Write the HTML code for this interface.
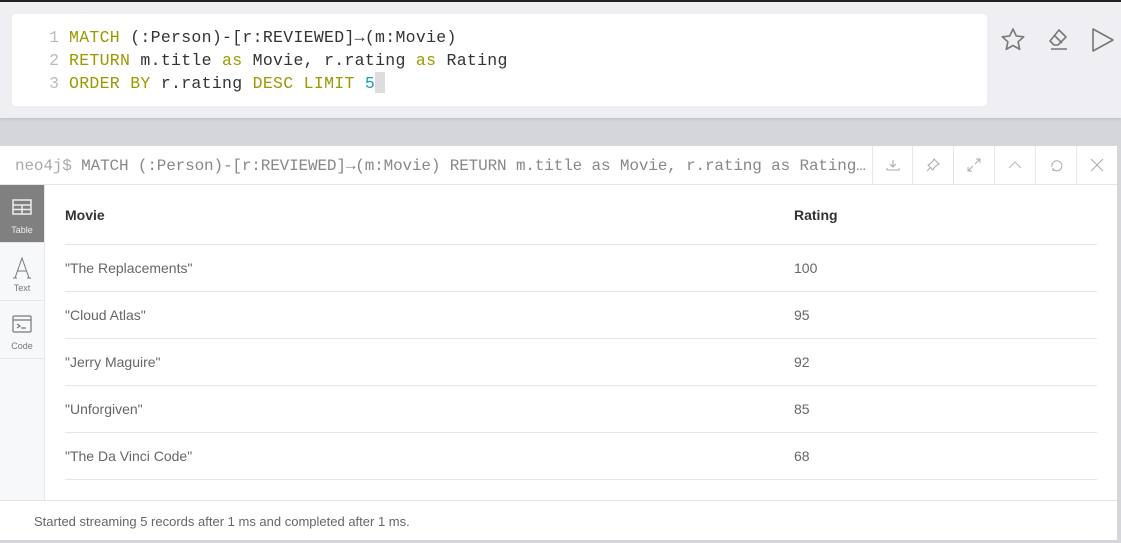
<!DOCTYPE html>
<html><head><meta charset="utf-8"><style>
*{margin:0;padding:0;box-sizing:border-box}
body{width:1121px;height:543px;overflow:hidden;background:#d4d6da;font-family:"Liberation Sans",sans-serif;position:relative}
.topline{position:absolute;left:0;top:0;width:1121px;height:2px;background:#222}
.edsec{position:absolute;left:0;top:2px;width:1121px;height:116px;background:#efeff3;box-shadow:0 1px 3px rgba(0,0,0,.12)}
.ed{position:absolute;left:12px;top:12px;width:975px;height:92px;background:#fff;border-radius:4px}
.code{position:absolute;left:0;top:12px;font-family:"Liberation Mono",monospace;font-size:16.5px;letter-spacing:0.3px;line-height:23px;color:#333;white-space:pre}
.ln{display:inline-block;width:57px;text-align:right;padding-right:10px;color:#bbb;letter-spacing:0}
.k{color:#9a9a00}.n{color:#17a2b8}
.cur{display:inline-block;width:10px;height:21px;background:#ddd;vertical-align:-5px}
.card{position:absolute;left:0;top:146px;width:1117px;height:394px;background:#fff}
.hdr{position:absolute;left:0;top:0;width:1117px;height:39px;border-bottom:1px solid #e6e6ea}
.hq{position:absolute;left:15px;top:11px;font-family:"Liberation Mono",monospace;font-size:16px;letter-spacing:-0.15px;color:#888;white-space:nowrap;width:855px;overflow:hidden;text-overflow:ellipsis}
.hq span{color:#aaa}
.btn{position:absolute;top:0;width:41px;height:39px;border-left:1px solid #e6e6ea}
.btn svg{position:absolute;left:13px;top:12px}
.side{position:absolute;left:0;top:39px;width:45px;height:315px;background:#f7f8fa;border-right:1px solid #e6e6ea}
.tab{position:absolute;left:0;width:44px;height:58px;border-bottom:1px solid #e6e6ea;text-align:center;font-size:9px;color:#777}
.tab.act{background:#808080;color:#eee}
.tab svg{position:absolute;left:12px;top:14px}
.tab .l{position:absolute;left:0;width:44px;top:40px}
.th{position:absolute;top:61px;font-size:14px;font-weight:bold;color:#333}
.row{position:absolute;left:65px;width:1032px;height:47px;border-top:1px solid #e6e6ea;font-size:14px;color:#666}
.row span{position:absolute;top:15px}
.foot{position:absolute;left:0;top:354px;width:1117px;height:40px;border-top:1px solid #e6e6ea;font-size:13px;color:#666}
.foot span{position:absolute;left:34px;top:13px}
</style></head><body>
<div class="topline"></div>
<div class="edsec">
<div class="ed"><div class="code"><span class="ln">1</span><span class="k">MATCH</span> (:Person)-[r:REVIEWED]→(m:Movie)
<span class="ln">2</span><span class="k">RETURN</span> m.title <span class="k">as</span> Movie, r.rating <span class="k">as</span> Rating
<span class="ln">3</span><span class="k">ORDER BY</span> r.rating <span class="k">DESC LIMIT</span> <span class="n">5</span><span class="cur"></span></div></div>
<svg style="position:absolute;left:1000px;top:25px" width="26" height="26" viewBox="0 0 26 26" fill="none" stroke="#777" stroke-width="1.6" stroke-linejoin="round"><path d="M13 2l3.3 7 7.4.8-5.6 5 1.6 7.5L13 18.5l-6.7 3.8 1.6-7.5-5.6-5 7.4-.8z"/></svg>
<svg style="position:absolute;left:1045px;top:25px" width="26" height="26" viewBox="0 0 26 26" fill="none" stroke="#777" stroke-width="1.6" stroke-linejoin="round"><path d="M14 3l7 7-8 8H9l-4-4z M9 8l8 8 M6 22h16"/></svg>
<svg style="position:absolute;left:1090px;top:25px" width="26" height="26" viewBox="0 0 26 26" fill="none" stroke="#777" stroke-width="1.6" stroke-linejoin="round"><path d="M3 2v22l20-11z"/></svg>
</div>
<div class="card">
<div class="hdr">
<div class="hq"><span>neo4j$</span> MATCH (:Person)-[r:REVIEWED]→(m:Movie) RETURN m.title as Movie, r.rating as Rating ORDER BY r.rating DESC LIMIT 5</div>
<div class="btn" style="left:872px"><svg width="14" height="14" viewBox="0 0 14 14" fill="none" stroke="#aaa"><path d="M7 2v7M4 6l3 3 3-3M1 10v2h12v-2"/></svg></div>
<div class="btn" style="left:912px"><svg width="14" height="14" viewBox="0 0 14 14" fill="none" stroke="#aaa"><path d="M8 1l5 5-2 1-3 3-1 2-5-5 2-1 3-3zM4 10l-3 3"/></svg></div>
<div class="btn" style="left:953px"><svg width="14" height="14" viewBox="0 0 14 14" fill="none" stroke="#aaa"><path d="M8 6l5-5M9 1h4v4M6 8l-5 5M1 9v4h4"/></svg></div>
<div class="btn" style="left:994px"><svg width="14" height="14" viewBox="0 0 14 14" fill="none" stroke="#bbb"><path d="M1 10l6-6 6 6"/></svg></div>
<div class="btn" style="left:1035px"><svg width="14" height="14" viewBox="0 0 14 14" fill="none" stroke="#aaa"><path d="M4 11a5 5 0 1 0-1-2M4 13v-3"/></svg></div>
<div class="btn" style="left:1076px"><svg width="14" height="14" viewBox="0 0 14 14" fill="none" stroke="#aaa"><path d="M1 1l12 12M13 1L1 13"/></svg></div>
</div>
<div class="side">
<div class="tab act" style="top:0"><svg width="20" height="16" viewBox="0 0 20 16" fill="none" stroke="#eee" stroke-width="1.5"><rect x="1" y="1" width="18" height="14"/><path d="M1 6h18M1 10.5h18M10 6v9"/></svg><div class="l">Table</div></div>
<div class="tab" style="top:58px"><svg width="20" height="22" viewBox="0 0 20 22" fill="none" stroke="#777" stroke-width="1"><path d="M3 21L10 1l7 20M5.5 14h9M1 21h4M15 21h4"/></svg><div class="l">Text</div></div>
<div class="tab" style="top:116px"><svg width="20" height="18" viewBox="0 0 20 18" fill="none" stroke="#777" stroke-width="1.2"><rect x="1" y="1" width="18" height="16" rx="1"/><path d="M1 5h18M5 9l3 2-3 2M9 13h5"/></svg><div class="l">Code</div></div>
</div>
<div class="th" style="left:65px">Movie</div>
<div class="th" style="left:794px">Rating</div>
<div class="row" style="top:98px"><span style="left:0">"The Replacements"</span><span style="left:729px">100</span></div>
<div class="row" style="top:145px"><span style="left:0">"Cloud Atlas"</span><span style="left:729px">95</span></div>
<div class="row" style="top:192px"><span style="left:0">"Jerry Maguire"</span><span style="left:729px">92</span></div>
<div class="row" style="top:239px"><span style="left:0">"Unforgiven"</span><span style="left:729px">85</span></div>
<div class="row" style="top:286px"><span style="left:0">"The Da Vinci Code"</span><span style="left:729px">68</span></div>
<div class="row" style="top:333px;height:1px"></div>
<div class="foot"><span>Started streaming 5 records after 1 ms and completed after 1 ms.</span></div>
</div>
</body></html>
